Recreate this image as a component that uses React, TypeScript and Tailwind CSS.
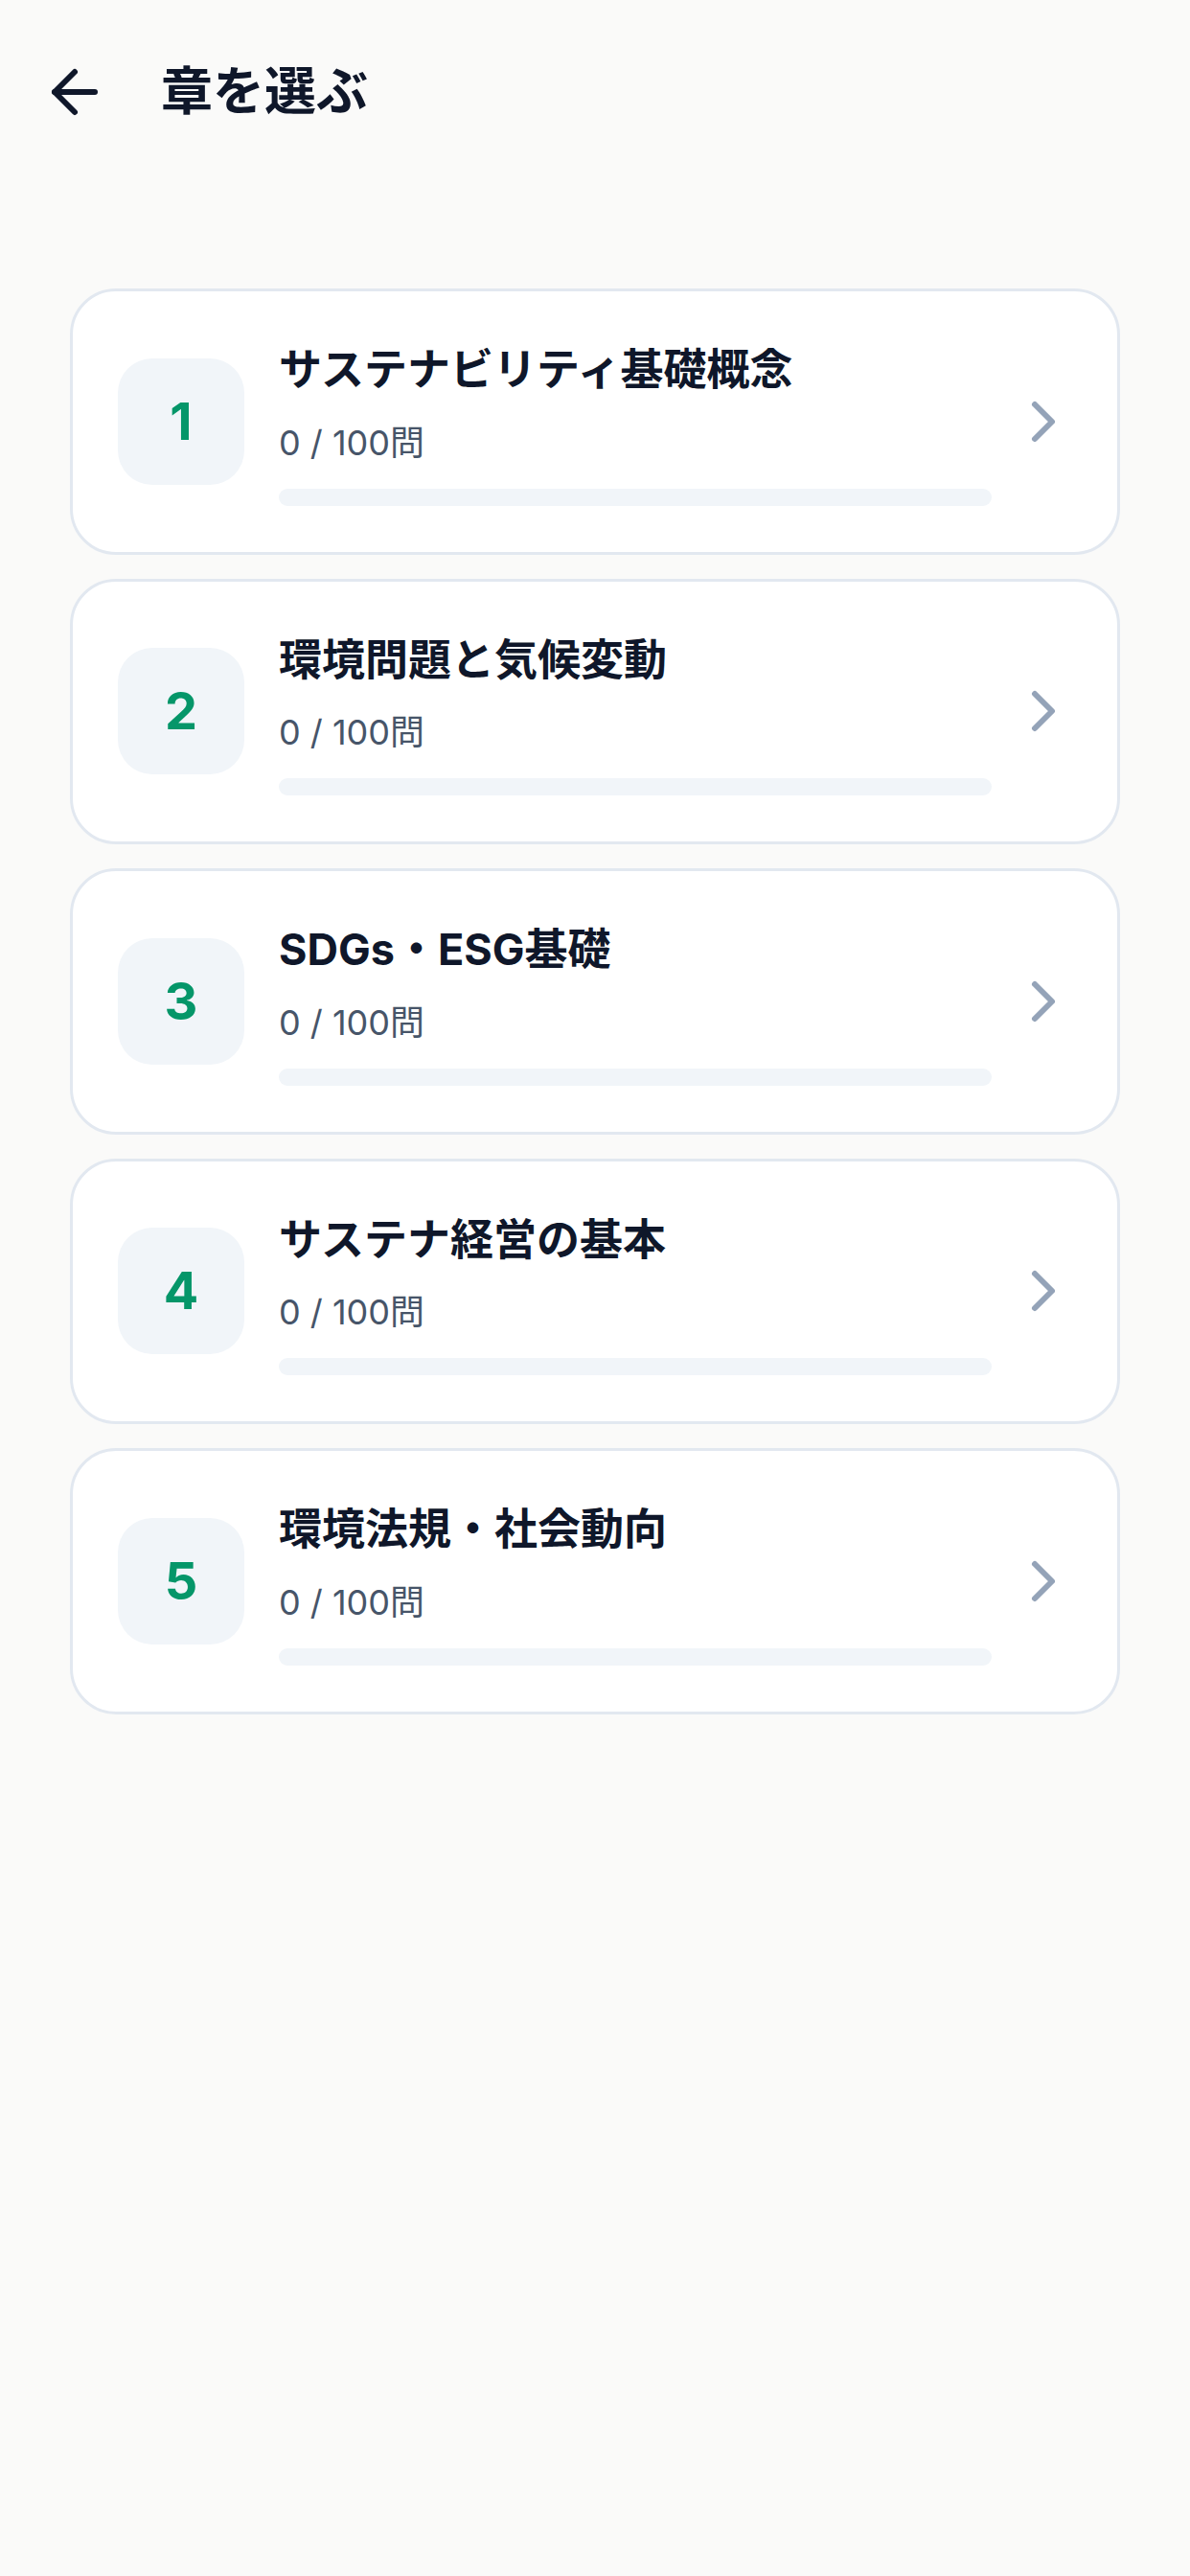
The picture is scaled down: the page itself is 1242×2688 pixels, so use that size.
import { ArrowLeft, ChevronRight } from "lucide-react";

type Chapter = {
  no: number;
  title: string;
  done: number;
  total: number;
};

const chapters: Chapter[] = [
  { no: 1, title: "サステナビリティ基礎概念", done: 0, total: 100 },
  { no: 2, title: "環境問題と気候変動", done: 0, total: 100 },
  { no: 3, title: "SDGs・ESG基礎", done: 0, total: 100 },
  { no: 4, title: "サステナ経営の基本", done: 0, total: 100 },
  { no: 5, title: "環境法規・社会動向", done: 0, total: 100 },
];

function ChapterCard({ chapter }: { chapter: Chapter }) {
  const pct = chapter.total ? (chapter.done / chapter.total) * 100 : 0;
  return (
    <button className="flex w-full items-center rounded-[48px] border-[3px] border-[#e2e8f0] bg-white pl-[47px] pr-[41px] py-[48px] text-left">
      {/* chapter number */}
      <div className="flex h-[132px] w-[132px] shrink-0 items-center justify-center rounded-[36px] bg-[#f1f5f9]">
        <span className="text-[54px] font-bold leading-none text-[#059669]">
          {chapter.no}
        </span>
      </div>

      <div className="ml-[36px] flex min-w-0 flex-1 flex-col">
        <p className="text-[45px] font-bold leading-[67.5px] text-[#0f172a]">
          {chapter.title}
        </p>
        <p className="mt-[18px] text-[36px] leading-[48px] text-[#475569]">
          {chapter.done} / {chapter.total}問
        </p>
        <div className="mt-[24px] h-[18px] w-full overflow-hidden rounded-full bg-[#f1f5f9]">
          <div
            className="h-full rounded-full bg-[#059669]"
            style={{ width: `${pct}%` }}
          />
        </div>
      </div>

      <ChevronRight
        size={72}
        strokeWidth={2}
        className="ml-[18px] shrink-0 text-[#94a3b8]"
      />
    </button>
  );
}

export default function App() {
  return (
    <div className="min-h-screen bg-[#fafaf9] font-['Inter','Noto_Sans_CJK_JP',sans-serif]">
      {/* Header */}
      <div className="flex items-center pl-[42px] pt-[60px]">
        <button className="shrink-0 text-[#0f172a]">
          <ArrowLeft size={72} strokeWidth={2} />
        </button>
        <h1 className="ml-[54px] text-[54px] font-bold leading-[72px] text-[#0f172a]">
          章を選ぶ
        </h1>
      </div>

      {/* Chapter list */}
      <div className="mx-[73px] mt-[169px] flex flex-col gap-[25px]">
        {chapters.map((c) => (
          <ChapterCard key={c.no} chapter={c} />
        ))}
      </div>
    </div>
  );
}
